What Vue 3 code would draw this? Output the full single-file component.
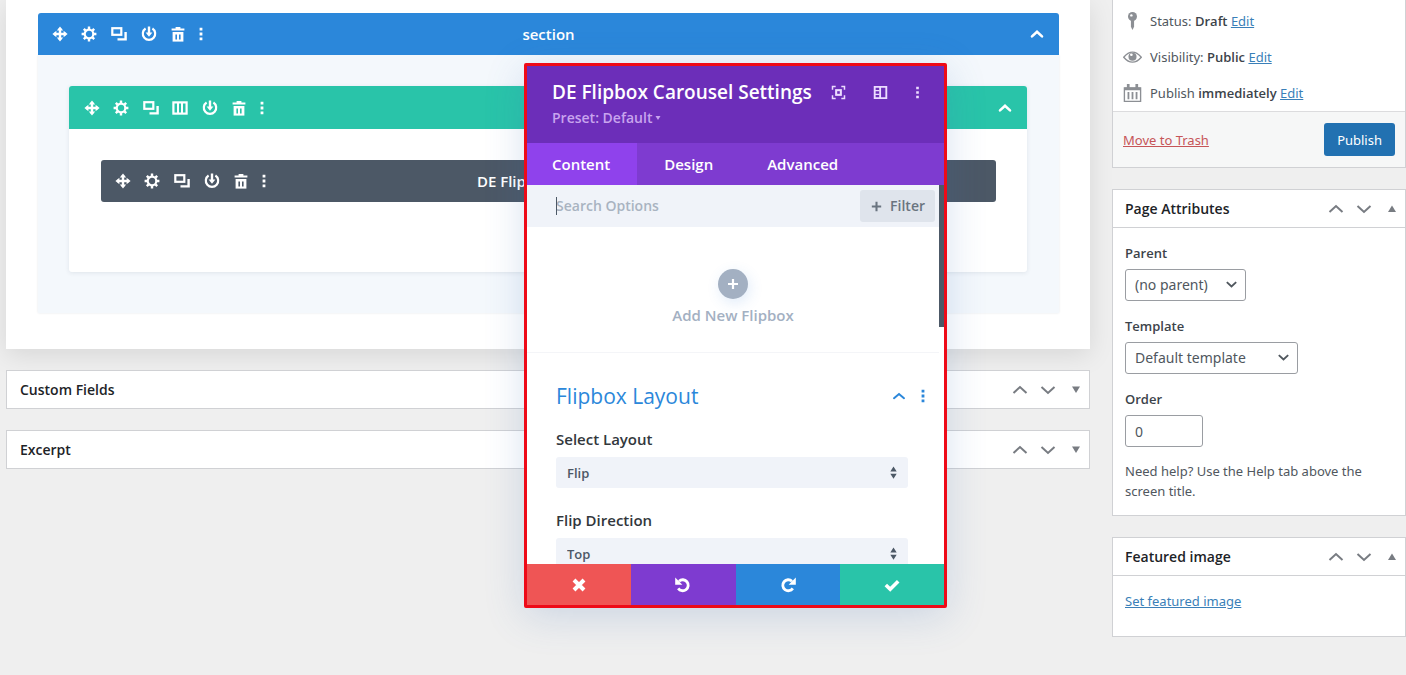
<script setup>
import { ref, h } from 'vue'

const layout = ref('Flip')
const direction = ref('Top')
const parent = ref('(no parent)')
const template = ref('Default template')
const order = ref('0')
const search = ref('')
const activeTab = ref('Content')
const tabs = ['Content', 'Design', 'Advanced']
const metaBoxes = ['Custom Fields', 'Excerpt']

const sectionTools = ['move', 'gear', 'copy', 'power', 'trash']
const rowTools = ['move', 'gear', 'copy', 'columns', 'power', 'trash']

const shapes = {
  move: '<path d="M8 2v12M2 8h12" stroke="currentColor" stroke-width="2.4"/><path d="M8 .4l3.2 4H4.8zM8 15.6l3.2-4H4.8zM.4 8l4-3.2v6.4zM15.6 8l-4-3.2v6.4z" fill="currentColor"/>',
  gear: '<circle cx="8" cy="8" r="4.3" fill="none" stroke="currentColor" stroke-width="2.2"/><path d="M8 .6v2.6M8 12.8v2.6M.6 8h2.6M12.8 8h2.6M2.8 2.8l1.8 1.8M11.4 11.4l1.8 1.8M13.2 2.8l-1.8 1.8M4.6 11.4l-1.8 1.8" stroke="currentColor" stroke-width="2.4"/>',
  copy: '<rect x="1.3" y="2.2" width="9" height="6.6" fill="none" stroke="currentColor" stroke-width="2.2"/><path d="M14.6 6v7.4H6.5" fill="none" stroke="currentColor" stroke-width="2.4"/>',
  columns: '<rect x="1.4" y="2.4" width="13.2" height="11.2" fill="none" stroke="currentColor" stroke-width="2.2"/><path d="M6 2v12M10 2v12" stroke="currentColor" stroke-width="2"/>',
  power: '<path d="M4.6 2.5a6.2 6.2 0 1 0 6.8 0" fill="none" stroke="currentColor" stroke-width="2.2"/><path d="M8 .5v8" stroke="currentColor" stroke-width="2.4"/><path d="M4.6 6.4h6.8L8 10.8z" fill="currentColor"/>',
  trash: '<path d="M1.6 2.6h4V1h4.8v1.6h4v2H1.6z" fill="currentColor"/><path d="M2.6 6h10.8v9.6H2.6z" fill="currentColor"/><path d="M6.2 8.4v5M9.8 8.4v5" stroke="var(--bar)" stroke-width="1.6"/>',
  dots: '<path d="M6.6 1.8h2.8v2.8H6.6zM6.6 6.6h2.8v2.8H6.6zM6.6 11.4h2.8v2.8H6.6z" fill="currentColor"/>',
  chevron: '<path d="M3 10.4l5-4.6 5 4.6" fill="none" stroke="currentColor" stroke-width="2.6" stroke-linecap="round"/>',
  thinChevron: '<path d="M3 10.2l5-4.2 5 4.2" fill="none" stroke="currentColor" stroke-width="2" stroke-linecap="round"/>',
  up: '<path d="M1.5 11L8 5l6.5 6" fill="none" stroke="currentColor" stroke-width="2"/>',
  down: '<path d="M1.5 5L8 11l6.5-6" fill="none" stroke="currentColor" stroke-width="2"/>',
  triUp: '<path d="M4 11h8L8 4.6z" fill="currentColor"/>',
  triDown: '<path d="M4 4.6h8L8 11z" fill="currentColor"/>',
  caret: '<path d="M3 5.5l5 4.6 5-4.6" fill="none" stroke="currentColor" stroke-width="2"/>',
  sorter: '<path d="M4.6 7h6.8L8 1.6zM4.6 9.2h6.8L8 14.6z" fill="currentColor"/>',
  focus: '<path d="M1.6 5V1.6H5M11 1.6h3.4V5M14.4 11v3.4H11M5 14.4H1.6V11" fill="none" stroke="currentColor" stroke-width="1.6"/><rect x="5.5" y="5.5" width="5" height="5" fill="none" stroke="currentColor" stroke-width="2.2"/>',
  panel: '<path d="M1.8 2h12.4v12H1.8z" fill="none" stroke="currentColor" stroke-width="2"/><path d="M7.6 2v12" stroke="currentColor" stroke-width="2"/><path d="M2 6h5M2 10h5" stroke="currentColor" stroke-width="1.4"/>',
  plus: '<path d="M8 3v10M3 8h10" stroke="currentColor" stroke-width="2.2"/>',
  close: '<path d="M3 3l10 10M13 3L3 13" stroke="currentColor" stroke-width="4"/>',
  undo: '<path d="M4 4.2a5.5 5.5 0 1 1-.8 7.2" fill="none" stroke="currentColor" stroke-width="2.8"/><path d="M.2.6v7.2h7.2z" fill="currentColor"/>',
  redo: '<path d="M12 4.2a5.5 5.5 0 1 0 .8 7.2" fill="none" stroke="currentColor" stroke-width="2.8"/><path d="M15.8.6v7.2H8.6z" fill="currentColor"/>',
  check: '<path d="M1.8 8l4.4 4.2 8-8" fill="none" stroke="currentColor" stroke-width="3.6"/>',
  pin: '<circle cx="8" cy="4" r="4" fill="currentColor"/><path d="M6.6 7h2.8v6L8 16l-1.4-3z" fill="currentColor"/><circle cx="7" cy="3" r="1.1" fill="#fff"/>',
  eye: '<path d="M.2 8.2Q4 3.6 8 3.6t7.8 4.6Q12 12.6 8 12.6T.2 8.2z" fill="none" stroke="currentColor" stroke-width="1.2"/><circle cx="8" cy="7.8" r="3.6" fill="currentColor"/><circle cx="7" cy="6" r="1.2" fill="#fff"/>',
  calendar: '<path d="M.8 3.4h14.4v12H.8z" fill="none" stroke="currentColor" stroke-width="1.2"/><path d="M.8 3h14.4v2.6H.8zM3 0h2.4v4H3zM10.6 0H13v4h-2.4z" fill="currentColor"/><path d="M4.4 7v6.6M8 7v6.6M11.6 7v6.6" stroke="currentColor" stroke-width="1.6"/>'
}

const Icon = (props) =>
  h('svg', { viewBox: '0 0 16 16', 'aria-hidden': 'true', innerHTML: shapes[props.name] })
Icon.props = ['name']
</script>

<template>
  <div class="page">
    <main class="main">
      <section class="builder">
        <div class="section">
          <header class="bar bar-section">
            <div class="tools">
              <button v-for="t in sectionTools" :key="t" class="tool" :aria-label="t"><Icon :name="t" class="icon" /></button>
            </div>
            <button class="tool more" aria-label="more"><Icon name="dots" class="icon" /></button>
            <span class="bar-title">section</span>
            <button class="tool fold" aria-label="collapse section"><Icon name="chevron" class="icon" /></button>
          </header>
          <div class="section-body">
            <div class="row">
              <header class="bar bar-row">
                <div class="tools tools-wide">
                  <button v-for="t in rowTools" :key="t" class="tool" :aria-label="t"><Icon :name="t" class="icon" /></button>
                </div>
                <button class="tool more" aria-label="more"><Icon name="dots" class="icon" /></button>
                <button class="tool fold" aria-label="collapse row"><Icon name="chevron" class="icon" /></button>
              </header>
              <div class="row-body">
                <div class="bar bar-module">
                  <div class="tools">
                    <button v-for="t in sectionTools" :key="t" class="tool" :aria-label="t"><Icon :name="t" class="icon" /></button>
                  </div>
                  <button class="tool more" aria-label="more"><Icon name="dots" class="icon" /></button>
                  <span class="bar-title">DE Flipbox Carousel</span>
                </div>
              </div>
            </div>
          </div>
        </div>
      </section>

      <section v-for="box in metaBoxes" :key="box" class="box">
        <header class="box-head">
          <h2>{{ box }}</h2>
          <div class="handles">
            <button class="tool" aria-label="move up"><Icon name="up" class="icon" /></button>
            <button class="tool" aria-label="move down"><Icon name="down" class="icon" /></button>
            <button class="tool" aria-label="toggle"><Icon name="triDown" class="icon" /></button>
          </div>
        </header>
      </section>
    </main>

    <aside class="side">
      <section class="box box-publish">
        <ul class="facts">
          <li><Icon name="pin" class="fact-icon" /><span>Status: <b>Draft</b> <a href="#">Edit</a></span></li>
          <li><Icon name="eye" class="fact-icon" /><span>Visibility: <b>Public</b> <a href="#">Edit</a></span></li>
          <li><Icon name="calendar" class="fact-icon" /><span>Publish <b>immediately</b> <a href="#">Edit</a></span></li>
        </ul>
        <footer class="actions">
          <a href="#" class="trash">Move to Trash</a>
          <button class="publish">Publish</button>
        </footer>
      </section>

      <section class="box">
        <header class="box-head">
          <h2>Page Attributes</h2>
          <div class="handles">
            <button class="tool" aria-label="move up"><Icon name="up" class="icon" /></button>
            <button class="tool" aria-label="move down"><Icon name="down" class="icon" /></button>
            <button class="tool" aria-label="toggle"><Icon name="triUp" class="icon" /></button>
          </div>
        </header>
        <div class="box-body attributes">
          <label for="parent">Parent</label>
          <div class="pick pick-parent">
            <select id="parent" v-model="parent"><option>(no parent)</option></select>
            <Icon name="caret" class="pick-icon" />
          </div>
          <label for="template">Template</label>
          <div class="pick pick-template">
            <select id="template" v-model="template"><option>Default template</option></select>
            <Icon name="caret" class="pick-icon" />
          </div>
          <label for="order">Order</label>
          <input id="order" v-model="order" class="order" type="text" />
          <p>Need help? Use the Help tab above the screen title.</p>
        </div>
      </section>

      <section class="box">
        <header class="box-head">
          <h2>Featured image</h2>
          <div class="handles">
            <button class="tool" aria-label="move up"><Icon name="up" class="icon" /></button>
            <button class="tool" aria-label="move down"><Icon name="down" class="icon" /></button>
            <button class="tool" aria-label="toggle"><Icon name="triUp" class="icon" /></button>
          </div>
        </header>
        <div class="box-body featured"><a href="#">Set featured image</a></div>
      </section>
    </aside>

    <div class="modal" role="dialog" aria-labelledby="modal-title">
      <header class="modal-head">
        <div class="modal-top">
          <h1 id="modal-title">DE Flipbox Carousel Settings</h1>
          <div class="modal-tools">
            <button class="tool" aria-label="expand"><Icon name="focus" class="icon" /></button>
            <button class="tool" aria-label="dock"><Icon name="panel" class="icon" /></button>
            <button class="tool modal-more" aria-label="more"><Icon name="dots" class="icon" /></button>
          </div>
        </div>
        <button class="preset">Preset: Default <Icon name="triDown" class="preset-icon" /></button>
      </header>
      <nav class="tabs">
        <button v-for="t in tabs" :key="t" :class="['tab', { active: t === activeTab }]" @click="activeTab = t">{{ t }}</button>
      </nav>
      <div class="modal-body">
        <div class="content">
          <div class="search">
            <div class="search-field">
              <input v-model="search" type="text" placeholder="Search Options" aria-label="Search Options" />
            </div>
            <button class="filter"><Icon name="plus" class="filter-icon" />Filter</button>
          </div>
          <button class="add">
            <span class="add-circle"><Icon name="plus" class="icon" /></span>
            Add New Flipbox
          </button>
          <div class="options">
            <div class="options-head">
              <h2>Flipbox Layout</h2>
              <button class="tool" aria-label="collapse"><Icon name="thinChevron" class="icon" /></button>
              <button class="tool" aria-label="more"><Icon name="dots" class="icon" /></button>
            </div>
            <div class="field">
              <label for="layout">Select Layout</label>
              <div class="choice">
                <select id="layout" v-model="layout"><option>Flip</option></select>
                <Icon name="sorter" class="choice-icon" />
              </div>
            </div>
            <div class="field">
              <label for="direction">Flip Direction</label>
              <div class="choice">
                <select id="direction" v-model="direction"><option>Top</option></select>
                <Icon name="sorter" class="choice-icon" />
              </div>
            </div>
          </div>
        </div>
        <div class="track"><div class="thumb"></div></div>
      </div>
      <footer class="modal-foot">
        <button class="discard" aria-label="discard"><Icon name="close" class="icon" /></button>
        <button class="undo" aria-label="undo"><Icon name="undo" class="icon" /></button>
        <button class="redo" aria-label="redo"><Icon name="redo" class="icon" /></button>
        <button class="save" aria-label="save"><Icon name="check" class="icon" /></button>
      </footer>
    </div>
  </div>
</template>

<style>
body {
  background: #efefef;
}
</style>

<style scoped>
* {
  box-sizing: border-box;
}
.page {
  position: relative;
  display: grid;
  grid-template-columns: 1fr 294px;
  column-gap: 22px;
  align-items: start;
  min-height: 100vh;
  padding-left: 6px;
  overflow: hidden;
  background: #efefef;
  color: #50575e;
  font: 13px/20px "Noto Sans", "Open Sans", sans-serif;
}
button,
input,
select {
  margin: 0;
  padding: 0;
  border: 0;
  background: none;
  color: inherit;
  font: inherit;
}
h1,
h2,
p,
ul {
  margin: 0;
  padding: 0;
}
.tool {
  display: flex;
  align-items: center;
  justify-content: center;
}
.icon {
  flex-shrink: 0;
  width: 16px;
  height: 16px;
}

/* builder */
.main {
  display: flex;
  flex-direction: column;
  gap: 21px;
}
.builder {
  padding: 13px 31px 36px 32px;
  background: #fff;
  box-shadow: 0 6px 24px rgba(0, 0, 0, 0.1);
}
.bar {
  position: relative;
  display: flex;
  align-items: center;
  height: 42px;
  padding: 0 7px;
  background: var(--bar);
  color: #fff;
  font: 600 15px/20px "Open Sans", sans-serif;
}
.bar-section {
  --bar: #2b87da;
  border-radius: 3px 3px 0 0;
}
.bar-row {
  --bar: #29c4a9;
  height: 43px;
  padding-left: 8px;
  border-radius: 3px 3px 0 0;
}
.bar-module {
  --bar: #4c5866;
  border-radius: 3px;
}
.tools {
  display: grid;
  grid-auto-flow: column;
  grid-auto-columns: 1fr;
  width: 148px;
}
.tools-wide {
  width: 177px;
}
.more {
  width: 16px;
}
.bar-title {
  position: absolute;
  left: 0;
  right: 0;
  text-align: center;
  pointer-events: none;
}
.fold {
  margin-left: auto;
  margin-right: 7px;
}
.section-body {
  padding: 31px 32px 41px 31px;
  background: #f4f8fc;
  box-shadow: 0 0 2px rgba(40, 60, 80, 0.12);
}
.row {
  background: #fff;
  border-radius: 3px;
  box-shadow: 0 1px 4px rgba(40, 60, 80, 0.1);
}
.row-body {
  padding: 31px 31px 70px 32px;
}

/* meta boxes */
.box {
  border: 1px solid #d0d1d4;
  background: #fff;
}
.box-head {
  display: flex;
  align-items: center;
  justify-content: space-between;
  height: 37px;
  padding-left: 13px;
}
.box-head h2 {
  color: #1d2327;
  font-family: "Open Sans", sans-serif;
  font-size: 14px;
  font-weight: 600;
  line-height: 20px;
}
.handles {
  display: flex;
  gap: 12px;
  padding-right: 5px;
  color: #787c82;
}
.side {
  display: flex;
  flex-direction: column;
  gap: 21px;
}
.side .box-head {
  height: 38px;
  padding-left: 12px;
  border-bottom: 1px solid #d0d1d4;
}
a {
  color: #3a7fb8;
}
b {
  color: #3c434a;
  font-family: "Open Sans", sans-serif;
  font-weight: 600;
}
.box-publish {
  border-top: 0;
}
.facts {
  display: flex;
  flex-direction: column;
  gap: 16px;
  padding: 11px 10px 8px;
  list-style: none;
}
.facts li {
  display: flex;
  align-items: center;
  gap: 8px;
}
.fact-icon {
  width: 19px;
  height: 18px;
  color: #8c8f94;
}
.actions {
  display: flex;
  align-items: center;
  justify-content: space-between;
  padding: 11px 10px;
  border-top: 1px solid #dcdcde;
  background: #f6f7f7;
}
.trash {
  color: #c65558;
}
.publish {
  height: 33px;
  padding: 0 13px;
  border-radius: 3px;
  background: #2271b1;
  color: #fff;
}
.box-body {
  padding: 15px 12px 14px;
}
.attributes {
  display: flex;
  flex-direction: column;
  align-items: flex-start;
}
.attributes label {
  margin-bottom: 6px;
  color: #3c434a;
  font-family: "Open Sans", sans-serif;
  font-weight: 600;
}
.pick {
  position: relative;
  margin-bottom: 15px;
}
.pick-parent {
  width: 121px;
}
.pick-template {
  width: 173px;
}
.pick select,
.order {
  display: block;
  width: 100%;
  height: 32px;
  padding: 0 9px;
  border: 1px solid #9a9da2;
  border-radius: 3px;
  appearance: none;
  background: #fff;
  font-size: 14px;
}
.pick-icon {
  position: absolute;
  top: 8px;
  right: 7px;
  width: 15px;
  height: 15px;
  pointer-events: none;
}
.attributes .order {
  width: 78px;
  margin-bottom: 14px;
}
.featured {
  padding-bottom: 25px;
}

/* settings dialog */
.modal {
  position: absolute;
  top: 63px;
  left: 524px;
  display: flex;
  flex-direction: column;
  width: 423px;
  height: 545px;
  border: 3px solid #ee0a18;
  border-radius: 2px;
  background: #fff;
  box-shadow: 0 8px 40px rgba(60, 110, 180, 0.2);
  font-family: "Open Sans", sans-serif;
  font-weight: 600;
}
.modal-head {
  padding: 12px 25px 14px;
  background: #6c2eb9;
  color: #fff;
}
.modal-top {
  display: flex;
  align-items: center;
  justify-content: space-between;
}
.modal-top h1 {
  font-size: 19px;
  font-weight: 600;
  line-height: 28px;
}
.modal-tools {
  display: flex;
  gap: 27px;
  color: #ecdcff;
}
.modal-tools .icon {
  width: 15px;
  height: 15px;
}
.modal-more {
  width: 4px;
}
.preset {
  display: flex;
  align-items: center;
  gap: 1px;
  height: 23px;
  color: #c8a4ee;
  font-size: 14px;
}
.preset-icon {
  width: 10px;
  height: 10px;
}
.tabs {
  display: flex;
  background: #7e3bd0;
  color: #fff;
}
.tab {
  height: 42px;
  padding: 0 27px;
  font-size: 15px;
}
.tab:first-child {
  padding-left: 25px;
}
.tab.active {
  background: #8f42ec;
}
.modal-body {
  display: flex;
  flex: 1;
  min-height: 0;
  overflow: hidden;
}
.content {
  flex: 1;
}
.track {
  width: 5px;
}
.thumb {
  height: 142px;
  background: #4c5866;
}
.search {
  display: flex;
  align-items: center;
  justify-content: space-between;
  height: 42px;
  padding: 0 4px 0 29px;
  background: #f0f3f9;
  font-size: 14px;
}
.search-field {
  position: relative;
  flex: 1;
}
.search-field::before {
  content: "";
  position: absolute;
  top: 1px;
  left: 0;
  width: 1px;
  height: 18px;
  background: #4c5866;
}
.search input {
  width: 100%;
}
.search input::placeholder {
  color: #a9b3c1;
  opacity: 1;
}
.filter {
  display: flex;
  align-items: center;
  gap: 6px;
  height: 32px;
  padding: 0 10px 0 9px;
  border-radius: 3px;
  background: #dfe4ec;
  color: #6a7480;
}
.filter-icon {
  width: 15px;
  height: 15px;
}
.add {
  display: flex;
  flex-direction: column;
  align-items: center;
  gap: 6px;
  width: 100%;
  height: 126px;
  padding-top: 42px;
  border-bottom: 1px solid #f4f5f8;
  color: #a3b0c2;
  font-size: 15px;
}
.add-circle {
  display: flex;
  align-items: center;
  justify-content: center;
  width: 30px;
  height: 30px;
  border-radius: 50%;
  background: #a3b0c2;
  color: #fff;
  box-shadow: 2px 4px 14px rgba(60, 130, 220, 0.16);
}
.options {
  padding: 28px 31px 0 29px;
}
.options-head {
  display: flex;
  align-items: center;
  gap: 8px;
  margin-right: -23px;
  margin-bottom: 18px;
  color: #2b87da;
}
.options-head h2 {
  flex: 1;
  font-size: 21px;
  font-weight: 400;
  line-height: 30px;
}
.field {
  margin-bottom: 22px;
}
.field label {
  display: block;
  margin-bottom: 8px;
  color: #32373c;
  font-size: 15px;
  line-height: 20px;
}
.choice {
  position: relative;
}
.choice select {
  display: block;
  width: 100%;
  height: 31px;
  padding: 0 11px;
  border-radius: 3px;
  appearance: none;
  background: #f0f3f9;
  color: #4c5866;
}
.choice-icon {
  position: absolute;
  top: 8px;
  right: 7px;
  width: 15px;
  height: 15px;
  color: #4c5866;
  pointer-events: none;
}
.modal-foot {
  display: grid;
  grid-template-columns: repeat(4, 1fr);
  height: 41px;
  color: #fff;
}
.modal-foot button {
  display: flex;
  align-items: center;
  justify-content: center;
}
.discard {
  background: #ef5555;
}
.undo {
  background: #7e3bd0;
}
.redo {
  background: #2b87da;
}
.save {
  background: #29c4a9;
}
</style>
